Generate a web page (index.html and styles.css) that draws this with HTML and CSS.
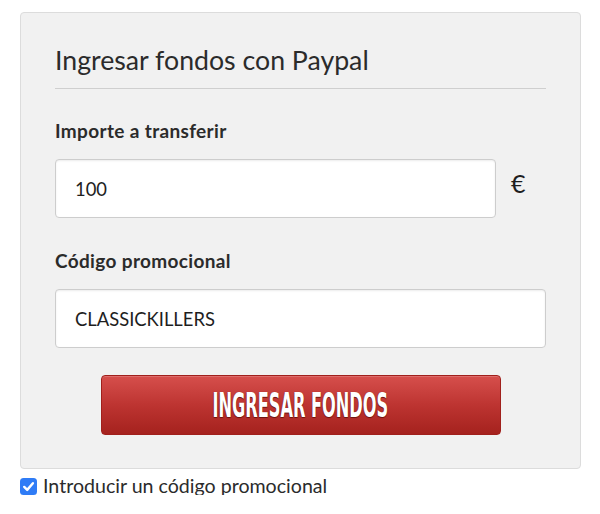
FILE: index.html
```html
<!DOCTYPE html>
<html lang="es">
<head>
<meta charset="utf-8">
<title>Ingresar fondos</title>
<link rel="stylesheet" href="styles.css">
</head>
<body>
<div class="page">
  <div class="panel">
    <h2 class="title">Ingresar fondos con Paypal</h2>
    <div class="field">
      <label class="label">Importe a transferir</label>
      <div class="amount-row">
        <input class="input input-amount" type="text" value="100">
        <span class="currency">€</span>
      </div>
    </div>
    <div class="field">
      <label class="label">Código promocional</label>
      <input class="input" type="text" value="CLASSICKILLERS">
    </div>
    <div class="actions">
      <button class="btn" type="button"><span class="btn-text">INGRESAR FONDOS</span></button>
    </div>
  </div>
  <label class="promo">
    <span class="check"><svg viewBox="0 0 17 17" width="17" height="17"><path d="M4.2 8.9 L7.2 11.9 L12.9 5.2" fill="none" stroke="#fff" stroke-width="2.4" stroke-linecap="round" stroke-linejoin="round"/></svg></span>
    <span class="promo-text">Introducir un código promocional</span>
  </label>
</div>
</body>
</html>
```

FILE: styles.css
```css
html, body {
  margin: 0;
  padding: 0;
  background: #ffffff;
}
body {
  font-family: Lato, "Open Sans", sans-serif;
  color: #2b2b2b;
}
.page {
  padding: 12px 19px 0 20px;
}
.panel {
  background: #f1f1f1;
  border: 1px solid #dcdcdc;
  border-radius: 4px;
  padding: 0 34px 33px;
}
.title {
  margin: 0;
  padding: 29px 0 10px;
  font-size: 26.7px;
  line-height: 36px;
  font-weight: 400;
  color: #2b2b2b;
  border-bottom: 1px solid #cfcfcf;
}
.field {
  display: flex;
  flex-direction: column;
  gap: 17px;
  margin-top: 31px;
}
.field + .field {
  margin-top: 32px;
}
.label {
  font-size: 19px;
  line-height: 22px;
  font-weight: 700;
  letter-spacing: 0.35px;
  color: #2b2b2b;
}
.amount-row {
  display: flex;
  align-items: center;
  gap: 15px;
}
.input {
  box-sizing: border-box;
  height: 59px;
  width: 100%;
  margin: 0;
  padding: 0 19px;
  border: 1px solid #cdcdcd;
  border-radius: 4px;
  background: #ffffff;
  box-shadow: inset 0 1px 2px rgba(0,0,0,0.08);
  font-family: Lato, "Open Sans", sans-serif;
  font-size: 18.4px;
  color: #1e1e1e;
  outline: none;
}
.input-amount {
  width: 441px;
  flex: none;
}
.currency {
  font-size: 25px;
  line-height: 25px;
  color: #1e1e1e;
  margin-top: -10px;
}
.actions {
  display: flex;
  justify-content: center;
  margin-top: 27px;
}
.btn {
  box-sizing: border-box;
  width: 400px;
  height: 60px;
  margin: 0;
  padding: 0;
  border: 1px solid #a0201c;
  border-radius: 4px;
  background: linear-gradient(to bottom, #d64f4c 0%, #bd3431 50%, #a5221e 100%);
  box-shadow: inset 0 1px 0 rgba(255,255,255,0.18);
  display: flex;
  align-items: center;
  justify-content: center;
  cursor: pointer;
}
.btn-text {
  display: inline-block;
  font-family: "Liberation Sans Narrow", "DejaVu Sans Condensed", sans-serif;
  font-weight: 700;
  font-size: 33px;
  line-height: 33px;
  color: #ffffff;
  transform: scaleX(0.545);
  text-shadow: 0 1px 1px #6a1410, 0 0 1px #7a1813;
  white-space: nowrap;
}
.promo {
  display: flex;
  align-items: center;
  gap: 6px;
  margin-top: 8px;
  font-size: 19.6px;
  line-height: 18px;
  color: #2b2b2b;
}
.check {
  width: 17px;
  height: 17px;
  border-radius: 3.5px;
  background: #2f7cf6;
  display: flex;
  flex: none;
}
.check svg {
  display: block;
}
```
